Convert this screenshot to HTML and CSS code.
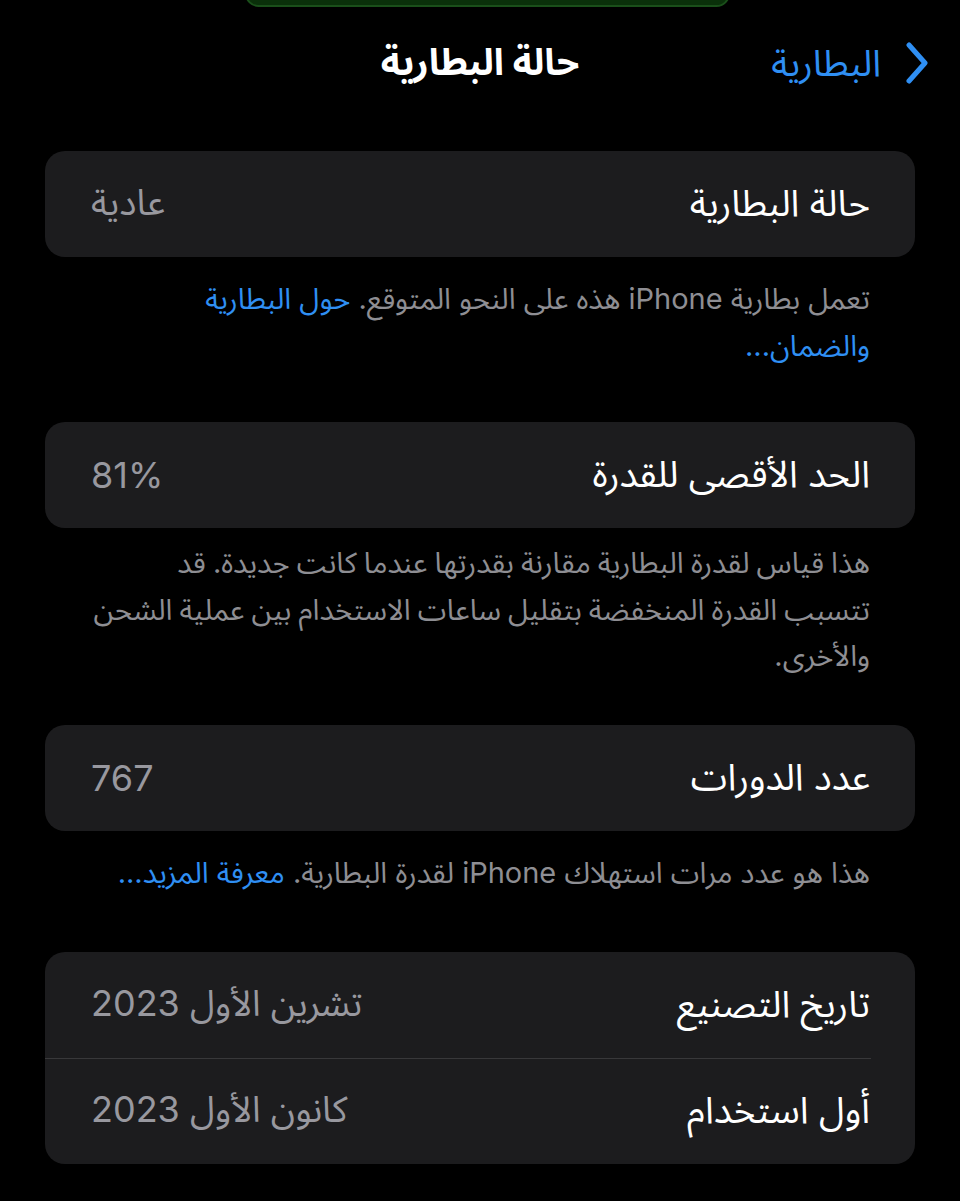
FILE: index.html
```html
<!DOCTYPE html>
<html lang="ar" dir="rtl">
<head>
<meta charset="utf-8">
<title>حالة البطارية</title>
<link rel="stylesheet" href="styles.css">
</head>
<body>
<div class="screen">
  <div class="island"></div>
  <header class="nav">
    <a class="back" href="#">
      <svg class="chev" width="28" height="42" viewBox="0 0 28 42"><polyline points="6,3 22,21 6,39" fill="none" stroke="#2f8ff3" stroke-width="5" stroke-linecap="round" stroke-linejoin="round"/></svg>
      <span class="back-text">البطارية</span>
    </a>
    <h1 class="title">حالة البطارية</h1>
    <span class="nav-spacer"></span>
  </header>

  <section class="card">
    <div class="row"><span class="label">حالة البطارية</span><span class="value">عادية</span></div>
  </section>
  <p class="footer f1">تعمل بطارية iPhone هذه على النحو المتوقع. <a class="link" href="#">حول البطارية والضمان...</a></p>

  <section class="card">
    <div class="row"><span class="label">الحد الأقصى للقدرة</span><span class="value num">81%</span></div>
  </section>
  <p class="footer f2">هذا قياس لقدرة البطارية مقارنة بقدرتها عندما كانت جديدة. قد<br>تتسبب القدرة المنخفضة بتقليل ساعات الاستخدام بين عملية الشحن<br>والأخرى.</p>

  <section class="card">
    <div class="row"><span class="label">عدد الدورات</span><span class="value num">767</span></div>
  </section>
  <p class="footer f3">هذا هو عدد مرات استهلاك iPhone لقدرة البطارية. <a class="link" href="#">معرفة المزيد...</a></p>

  <section class="card">
    <div class="row"><span class="label">تاريخ التصنيع</span><span class="value">تشرين الأول 2023</span></div>
    <div class="sep"></div>
    <div class="row"><span class="label">أول استخدام</span><span class="value">كانون الأول 2023</span></div>
  </section>
</div>
</body>
</html>
```
FILE: styles.css
```css
html, body {
  margin: 0;
  padding: 0;
  background: #000;
}
body {
  font-family: "Inter", "Noto Sans Arabic", "DejaVu Sans", sans-serif;
  color: #fff;
  width: 960px;
  height: 1201px;
  overflow: hidden;
}
.screen {
  position: relative;
  padding: 0 45px;
}
.island {
  position: absolute;
  top: -20px;
  left: 245px;
  width: 481px;
  height: 23px;
  border-radius: 14px;
  background: #0a300a;
  border: 2px solid #1a4f1a;
}
.nav {
  height: 151px;
  display: grid;
  grid-template-columns: 1fr auto 1fr;
  align-items: start;
}
.back {
  display: flex;
  align-items: center;
  gap: 22px;
  text-decoration: none;
  color: #2f8ff3;
  margin-right: -16px;
  margin-top: 41px;
  justify-self: start;
}
.chev { display: block; }
.back-text {
  font-size: 37px;
  line-height: 44px;
}
.title {
  margin: 40px 0 0 0;
  font-size: 37px;
  font-weight: 700;
  line-height: 44px;
}
.card {
  background: #1c1c1e;
  border-radius: 20px;
  overflow: hidden;
}
.row {
  height: 106px;
  display: flex;
  align-items: center;
  justify-content: space-between;
  padding: 0 45px 0 46px;
}
.card .row + .sep + .row { height: 105px; }
.label {
  font-size: 37px;
  color: #fff;
}
.value {
  font-size: 36px;
  color: #98989f;
}
.sep {
  height: 1px;
  background: #38383a;
  margin-right: 44px;
}
.footer {
  margin: 0;
  padding: 18px 45px 53px 40px;
  font-size: 29px;
  line-height: 47px;
  color: #8e8e93;
}
.footer.f2 {
  padding-top: 12px;
  line-height: 46.5px;
  padding-bottom: 45px;
  padding-left: 0;
  margin-left: -10px;
  word-spacing: -1px;
}
.footer.f3 {
  padding-bottom: 56px;
}
.link {
  color: #2f8ff3;
  text-decoration: none;
}
```
